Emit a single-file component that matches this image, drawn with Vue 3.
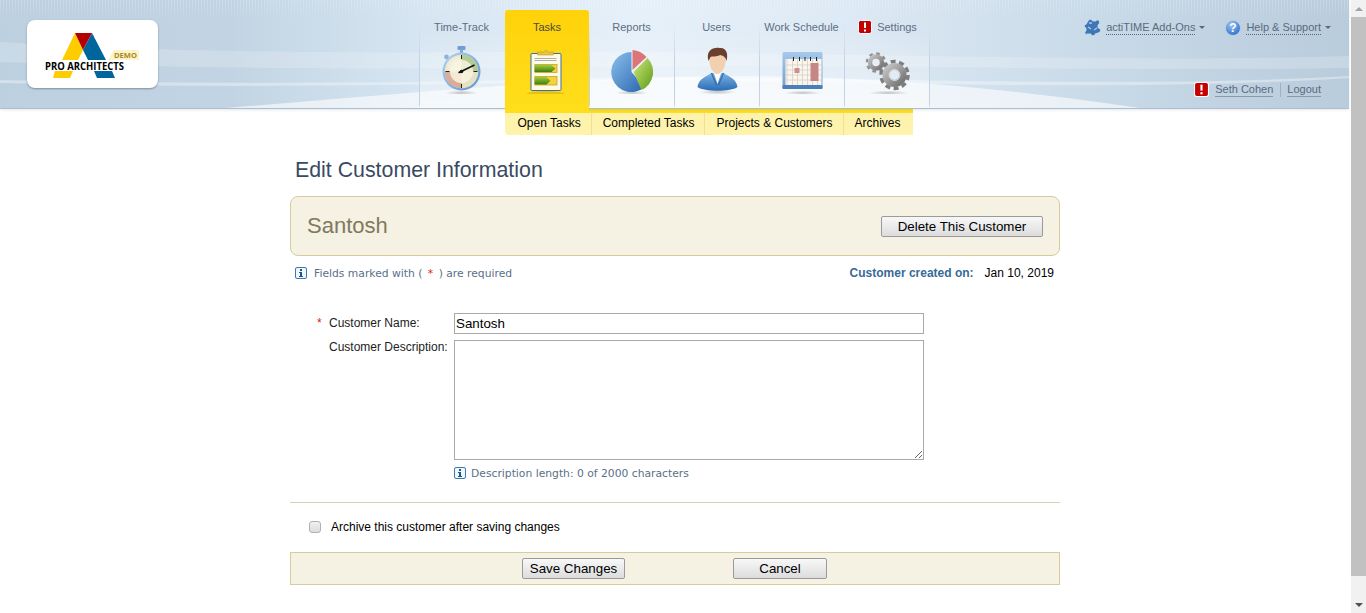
<template>
  <div class="page">
    <div class="main">
      <header class="header">
        <svg class="waves" viewBox="0 0 1349 108" preserveAspectRatio="none">
          <path d="M0 42 C120 50 300 54 500 52 C800 50 1100 64 1349 56 L1349 68 C1100 72 800 62 500 68 C300 70 120 66 0 62 Z" fill="#fff" opacity=".2" />
          <path d="M0 80 C200 84 400 84 600 78 C800 74 1100 90 1349 76 L1349 78 C1100 94 800 78 600 81 C400 86 200 88 0 83 Z" fill="#fff" opacity=".35" />
          <path d="M225 108 C400 94 560 78 720 76 C880 76 1000 88 1140 108 Z" fill="#fff" opacity=".6" />
        </svg>
        <div class="stripes"></div>

        <div class="logo">
          <svg width="131" height="68" viewBox="27 20 131 68">
            <polygon points="62,60 75,33 83,50 78,60" fill="#ffcc00" />
            <polygon points="75,33 92,33 83,50" fill="#b40000" />
            <polygon points="83,50 92,33 106,60 88,60" fill="#00659c" />
            <polygon points="55,71 73,71 70,78 53,78" fill="#ffcc00" />
            <polygon points="94,71 112,71 115,78 97,78" fill="#00659c" />
            <polygon points="108,60 114,50 139,50 139,60" fill="#fdf3c8" />
            <text x="114" y="58" class="logo-demo" textLength="23" lengthAdjust="spacingAndGlyphs">DEMO</text>
            <text x="45" y="70" class="logo-name" textLength="79" lengthAdjust="spacingAndGlyphs">PRO ARCHITECTS</text>
          </svg>
        </div>

        <nav class="tabs">
          <div class="tab">
            <span class="tab-label">Time-Track</span>
            <svg class="tab-icon" width="50" height="50" viewBox="437.5 44 50 50">
              <defs>
                <radialGradient id="shadow">
                  <stop offset="0" stop-color="#000" stop-opacity=".22" />
                  <stop offset="1" stop-color="#000" stop-opacity="0" />
                </radialGradient>
                <linearGradient id="blueRim" x1="0" y1="0" x2="1" y2="1">
                  <stop offset="0" stop-color="#b4d4f2" />
                  <stop offset="1" stop-color="#5b92d0" />
                </linearGradient>
                <radialGradient id="dial" cx=".4" cy=".4">
                  <stop offset="0" stop-color="#fffdf2" />
                  <stop offset="1" stop-color="#e6e0c4" />
                </radialGradient>
                <linearGradient id="pieBlue" x1="0" y1="0" x2="1" y2="1">
                  <stop offset="0" stop-color="#8cc0ec" />
                  <stop offset="1" stop-color="#2a66ae" />
                </linearGradient>
                <linearGradient id="pieGreen" x1="0" y1="0" x2="1" y2="1">
                  <stop offset="0" stop-color="#cfe87c" />
                  <stop offset="1" stop-color="#5c9a14" />
                </linearGradient>
                <linearGradient id="suit" x1="0" y1="0" x2="0" y2="1">
                  <stop offset="0" stop-color="#7fb2e4" />
                  <stop offset="1" stop-color="#2a6cb4" />
                </linearGradient>
                <linearGradient id="arrow" x1="0" y1="0" x2="0" y2="1">
                  <stop offset="0" stop-color="#a0cc3e" />
                  <stop offset="1" stop-color="#3f7d0a" />
                </linearGradient>
                <linearGradient id="calTop" x1="0" y1="0" x2="0" y2="1">
                  <stop offset="0" stop-color="#a6c8ea" />
                  <stop offset="1" stop-color="#6e9fd2" />
                </linearGradient>
                <linearGradient id="steel" x1="0" y1="0" x2="1" y2="1">
                  <stop offset="0" stop-color="#c4c4c4" />
                  <stop offset="1" stop-color="#727272" />
                </linearGradient>
                <radialGradient id="helpBlue" cx=".4" cy=".3" r=".8">
                  <stop offset="0" stop-color="#9cc4f0" />
                  <stop offset="1" stop-color="#2566c4" />
                </radialGradient>
              </defs>
              <ellipse cx="461" cy="93" rx="16" ry="3" fill="url(#shadow)" />
              <rect x="457" y="46" width="8" height="4" rx="1" fill="#6f9ed4" />
              <rect x="459.500" y="49" width="3" height="4" fill="#7ea7d6" />
              <circle cx="446" cy="57" r="2.400" fill="#8fb3dc" />
              <circle cx="461" cy="71.500" r="19" fill="url(#blueRim)" />
              <circle cx="461" cy="71.500" r="16.800" fill="url(#dial)" />
              <path d="M461 71.500 L461 54.700 A16.800 16.800 0 0 1 477.800 71.500 Z" fill="#a6c184" opacity=".75" />
              <path d="M461 71.500 L461 88.300 A16.800 16.800 0 0 1 444.200 71.500 Z" fill="#d49a8a" opacity=".75" />
              <circle cx="461" cy="71.500" r="11.500" fill="#f7f3de" opacity=".85" />
              <path d="M461 55v4M461 84v4M445 71.500h4M473 71.500h4" stroke="#222" stroke-width="1" />
              <path d="M458 72.800 L474 65" stroke="#111" stroke-width="1.600" />
              <circle cx="461" cy="71.500" r="1.800" fill="#111" />
            </svg>
          </div>

          <div class="tab tab-active">
            <span class="tab-label">Tasks</span>
            <svg class="tab-icon" width="50" height="50" viewBox="522.5 44 50 50">
              <ellipse cx="546" cy="94" rx="19" ry="3" fill="#c8a000" opacity=".45" />
              <rect x="531.500" y="53.500" width="30" height="37" rx="1" fill="#fdfbe6" stroke="#3a6cb2" />
              <path d="M538 55 V52 H544 L546.500 50 L549 52 H554 V55 Z" fill="#e7c04a" stroke="#c59c24" stroke-width=".6" />
              <path d="M535 58.500h22M535 60.500h22" stroke="#9a9a9a" stroke-width=".8" />
              <rect x="535.500" y="64.500" width="22" height="8" fill="#f7d23c" stroke="#b89a1a" stroke-width=".7" />
              <polygon points="535,65 552,65 556,68.500 552,72 535,72" fill="url(#arrow)" />
              <rect x="535.500" y="76.500" width="22" height="8.500" fill="#f7d23c" stroke="#b89a1a" stroke-width=".7" />
              <polygon points="535,77 547,77 551,80.700 547,84.500 535,84.500" fill="url(#arrow)" />
            </svg>
          </div>

          <div class="tab">
            <span class="tab-label">Reports</span>
            <svg class="tab-icon" width="50" height="50" viewBox="607.5 44 50 50">
              <ellipse cx="631" cy="93" rx="16" ry="3" fill="url(#shadow)" />
              <path d="M631 72 L631 52 A20 20 0 1 0 644 87 Z" fill="url(#pieBlue)" />
              <path d="M632 70 L632 50 A21 21 0 0 1 646 57 Z" fill="#dc7478" />
              <path d="M633 72 L647 58 A20 20 0 0 1 641 90 Z" fill="url(#pieGreen)" />
            </svg>
          </div>

          <div class="tab">
            <span class="tab-label">Users</span>
            <svg class="tab-icon" width="50" height="50" viewBox="692.5 44 50 50">
              <ellipse cx="717" cy="92" rx="19" ry="2.500" fill="url(#shadow)" />
              <path d="M697 87 C698 79 705 77 711 73 H723 C729 77 736 79 737 87 C730 92 704 92 697 87 Z" fill="url(#suit)" />
              <path d="M713 72 L717 84 L721 72 Z" fill="#fff" />
              <path d="M711 73 L716 85 M723 73 L718 85" stroke="#2d6bb0" stroke-width="1.200" fill="none" />
              <path d="M709 59 C709 52 725 52 725 59 C726 66 721 74 717 74 C713 74 708 66 709 59 Z" fill="#f2cfae" />
              <path d="M708 61 C705 51 712 47 719 48 C726 47 728 54 726 61 C725 57 723 56 720 55 C716 57 711 56 710 57 Z" fill="#6b3f2e" />
            </svg>
          </div>

          <div class="tab">
            <span class="tab-label">Work Schedule</span>
            <svg class="tab-icon" width="50" height="50" viewBox="777.5 44 50 50">
              <ellipse cx="802" cy="93" rx="18" ry="2.500" fill="url(#shadow)" />
              <rect x="782" y="52" width="40" height="37" rx="1.500" fill="url(#calTop)" />
              <rect x="782" y="85" width="40" height="4" rx="1" fill="#4c7fba" />
              <rect x="785" y="59" width="36" height="26" fill="#f9f6ee" />
              <path d="M786.500 59v26M792 59v26M797 59v26M802 59v26M807 59v26M812 59v26M817 59v26M785 65h36M785 70h36M785 75h36M785 80h36" stroke="#d6c8c0" stroke-width=".7" />
              <rect x="794" y="68" width="5" height="5" fill="#cc8e8e" />
              <rect x="810" y="63" width="8" height="18" fill="#c68686" />
              <path d="M793 57v4M799 57v4M804.500 57v4M810 57v4M816 57v4" stroke="#222" stroke-width="1" />
            </svg>
          </div>

          <div class="tab">
            <span class="tab-label tab-label-alert">
              <svg class="alert" width="14" height="14" viewBox="0 0 14 14">
                <rect x=".5" y=".5" width="13" height="13" rx="2" fill="#c40000" stroke="#fff" />
                <rect x="6" y="2.500" width="2" height="5.500" fill="#fff" />
                <rect x="6" y="9.500" width="2" height="2" fill="#fff" />
              </svg>
              Settings
            </span>
            <svg class="tab-icon" width="50" height="50" viewBox="862.5 44 50 50">
              <ellipse cx="888" cy="93" rx="20" ry="2.500" fill="url(#shadow)" />
              <circle cx="875.500" cy="62.500" r="9" fill="none" stroke="#8f8f8f" stroke-width="2.500" stroke-dasharray="3.500 3.570" />
              <circle cx="875.500" cy="62.500" r="6" fill="none" stroke="url(#steel)" stroke-width="4.500" />
              <circle cx="894" cy="75" r="13.500" fill="none" stroke="#7e7e7e" stroke-width="3.500" stroke-dasharray="5 3.480" />
              <circle cx="894" cy="75" r="8.500" fill="none" stroke="url(#steel)" stroke-width="7" />
              <circle cx="894" cy="75" r="5.500" fill="none" stroke="#dcdcdc" stroke-width="1" />
            </svg>
          </div>
        </nav>

        <div class="user-area">
          <div class="user-top">
            <span class="top-item">
              <svg width="17" height="17" viewBox="0 0 17 17">
                <path d="M4 2 C5 0 8 0 8.500 2 L12 2 C12 1 15 0 15.500 3 C16 5 14 5.500 14 6 L14 9 C15 8.500 17 10 16.500 12 C16 14 14 13.500 14 14 L11 15 C11.500 17 7 17.500 7 15 L3 15 C1 16 0 13 2 12 L2 9 C0 9 0 5 2 5.500 Z" fill="#3f76b6" stroke="#c9def2" stroke-width=".8" />
                <path d="M5 4 H8 M4 8 L7 10 M10 11 L13 9" stroke="#a9c9ea" stroke-width="1.400" fill="none" />
              </svg>
              <a class="dotted">actiTIME Add-Ons</a><i class="caret"></i>
            </span>
            <span class="top-item">
              <svg width="16" height="16" viewBox="0 0 16 16">
                <circle cx="8" cy="8" r="7.500" fill="url(#helpBlue)" stroke="#b4cfec" />
                <text x="8" y="12" class="help-mark" text-anchor="middle">?</text>
              </svg>
              <a class="dotted">Help &amp; Support</a><i class="caret"></i>
            </span>
          </div>
          <div class="user-bottom">
            <svg class="alert" width="15" height="15" viewBox="0 0 14 14">
              <rect x=".5" y=".5" width="13" height="13" rx="2" fill="#c40000" stroke="#fff" />
              <rect x="6" y="2.500" width="2" height="5.500" fill="#fff" />
              <rect x="6" y="9.500" width="2" height="2" fill="#fff" />
            </svg>
            <a class="solid">Seth Cohen</a>
            <span class="sep"></span>
            <a class="solid">Logout</a>
          </div>
        </div>
      </header>

      <div class="subnav">
        <a v-for="item in subItems" :key="item" class="subnav-item">{{ item }}</a>
      </div>

      <main class="content">
        <h1 class="title">Edit Customer Information</h1>

        <section class="name-panel">
          <span class="name">Santosh</span>
          <button class="btn btn-delete">Delete This Customer</button>
        </section>

        <div class="note-row">
          <span class="note note-fields">
            <svg class="info" width="12" height="12" viewBox="0 0 12 12">
              <rect x=".5" y=".5" width="11" height="11" rx="1.500" fill="#eef5fb" stroke="#3f78ad" />
              <rect x="5" y="2" width="2" height="2" fill="#1f5688" />
              <path d="M4 5h3v4h1v1H4V9h1V6H4Z" fill="#1f5688" />
            </svg>
            <span>Fields marked with ( <b class="req">*</b> ) are required</span>
          </span>
          <span class="created"><b>Customer created on:</b><span class="created-date">Jan 10, 2019</span></span>
        </div>

        <form class="form" @submit.prevent>
          <label class="form-label"><span class="req">*</span>Customer Name:</label>
          <input class="field" type="text" value="Santosh" />
          <label class="form-label form-label-top">Customer Description:</label>
          <textarea class="field field-area"></textarea>
          <span class="note note-length">
            <svg class="info" width="12" height="12" viewBox="0 0 12 12">
              <rect x=".5" y=".5" width="11" height="11" rx="1.500" fill="#eef5fb" stroke="#3f78ad" />
              <rect x="5" y="2" width="2" height="2" fill="#1f5688" />
              <path d="M4 5h3v4h1v1H4V9h1V6H4Z" fill="#1f5688" />
            </svg>
            <span>Description length: 0 of 2000 characters</span>
          </span>
        </form>

        <div class="divider"></div>

        <label class="archive">
          <input class="check" type="checkbox" />
          <span>Archive this customer after saving changes</span>
        </label>

        <div class="actions">
          <button class="btn btn-save">Save Changes</button>
          <button class="btn btn-cancel">Cancel</button>
        </div>
      </main>
    </div>

    <div class="scrollbar">
      <div class="scroll-arrow"><i class="arrow-up"></i></div>
      <div class="scroll-thumb"></div>
      <div class="scroll-rest"></div>
      <div class="scroll-arrow"><i class="arrow-down"></i></div>
    </div>
  </div>
</template>

<script setup>
const subItems = ['Open Tasks', 'Completed Tasks', 'Projects & Customers', 'Archives']
</script>

<style>
html, body {
  margin: 0;
  overflow: hidden;
  background: #fff;
}
</style>

<style scoped>
.page {
  display: flex;
  height: 613px;
  overflow: hidden;
  font-family: "Liberation Sans", Arial, sans-serif;
  font-size: 12px;
  color: #000;
}

.main {
  flex: 1;
  min-width: 0;
}

.header {
  position: relative;
  display: flex;
  height: 108px;
  border-bottom: 1px solid #a9bfd3;
  box-shadow: 0 1px 3px rgba(0, 0, 0, 0.1);
  background: linear-gradient(90deg, #bdd0e0 0, #c2d4e3 230px, #d6e5f1 420px, #e6f0f9 640px, #dde9f4 850px, #c9dae8 1090px, #b9ccdc 1349px);
}

.waves {
  position: absolute;
  left: 0;
  top: 0;
  width: 100%;
  height: 100%;
}

.stripes {
  position: absolute;
  left: 0;
  top: 0;
  width: 100%;
  height: 20px;
  background: repeating-linear-gradient(90deg, rgba(255, 255, 255, 0.22) 0 1px, transparent 1px 3px);
  -webkit-mask-image: linear-gradient(#000, transparent);
  mask-image: linear-gradient(#000, transparent);
}

.logo {
  position: relative;
  width: 131px;
  height: 68px;
  margin: 20px 0 0 27px;
  background: #fff;
  border-radius: 8px;
  box-shadow: 0 1px 2px rgba(60, 80, 100, 0.5);
}

.logo svg {
  display: block;
}

.logo-name {
  font-family: "Open Sans", sans-serif;
  font-weight: 700;
  font-size: 11px;
  fill: #000;
}

.logo-demo {
  font-family: "Open Sans", sans-serif;
  font-weight: 700;
  font-size: 7.500px;
  fill: #a8892c;
}

.tabs {
  position: relative;
  display: flex;
  margin: 0 0 0 261px;
}

.tab {
  display: flex;
  flex-direction: column;
  align-items: center;
  width: 85px;
  height: 108px;
  border-radius: 0 0 4px 4px;
  background:
    linear-gradient(rgba(195, 210, 228, 0) 25px, #c3d2e4 60px) left top / 1px 100% no-repeat,
    linear-gradient(rgba(255, 255, 255, 0) 25%, rgba(255, 255, 255, 0.4));
}

.tab:last-child {
  width: 86px;
  background:
    linear-gradient(rgba(195, 210, 228, 0) 25px, #c3d2e4 60px) left top / 1px 100% no-repeat,
    linear-gradient(rgba(195, 210, 228, 0) 25px, #c3d2e4 60px) right top / 1px 100% no-repeat,
    linear-gradient(rgba(255, 255, 255, 0) 25%, rgba(255, 255, 255, 0.4));
}

.tab-active {
  position: relative;
  z-index: 2;
  width: 84px;
  height: 103px;
  margin-top: 10px;
  margin-left: 1px;
  border-radius: 3px 3px 0 0;
  background: linear-gradient(#ffd20a, #ffde1c);
}

.tab-label {
  display: block;
  margin-top: 20px;
  height: 14px;
  line-height: 14px;
  font-size: 11px;
  color: #5e6e82;
  white-space: nowrap;
}

.tab-active .tab-label {
  margin-top: 10px;
  color: #4a4a3a;
}

.tab-label-alert {
  display: flex;
  align-items: center;
  gap: 5px;
  margin-left: 1px;
}

.tab-icon {
  display: block;
  margin: 10px 0 0 2px;
}

.tab-active .tab-icon {
  margin-left: 0;
}

.tab:last-child .tab-icon {
  margin-left: 1px;
}

.alert {
  display: block;
  flex: none;
}

.user-area {
  position: relative;
  margin-left: auto;
  padding-right: 18px;
  display: flex;
  flex-direction: column;
  align-items: flex-end;
  font-size: 11px;
  color: #5a6a7d;
}

.user-top {
  display: flex;
  align-items: center;
  gap: 20px;
  margin-top: 19px;
}

.top-item {
  display: flex;
  align-items: center;
  gap: 5px;
}

.help-mark {
  font-size: 12px;
  font-weight: 700;
  fill: #fff;
}

.dotted {
  border-bottom: 1px dotted #55657a;
  line-height: 13px;
}

.caret {
  width: 0;
  height: 0;
  margin-left: -1px;
  border: 3px solid transparent;
  border-top-color: #5a6a7d;
  border-bottom: 0;
}

.user-bottom {
  display: flex;
  align-items: center;
  margin-top: 46px;
  margin-right: 10px;
}

.solid {
  border-bottom: 1px solid #8a99aa;
  line-height: 13px;
}

.user-bottom .solid:first-of-type {
  margin-left: 6px;
}

.sep {
  width: 1px;
  height: 14px;
  margin: 0 6px 0 7px;
  background: #9fb0c0;
}

.subnav {
  display: flex;
  width: 408px;
  height: 22px;
  margin-left: 505px;
  border-top: 4px solid #ffdf22;
  border-radius: 0 0 0 4px;
  background: #fdf3ad;
  color: #000;
  line-height: 20px;
}

.subnav-item {
  padding: 0 10px 0 11px;
  border-left: 1px solid #f1e08e;
  white-space: nowrap;
}

.subnav-item:first-child {
  padding-left: 12.500px;
  border-left: 0;
}

.content {
  width: 770px;
  margin-left: 290px;
}

.title {
  margin: 23px 0 14px 5px;
  height: 24px;
  line-height: 24px;
  font-size: 21.330px;
  font-weight: 400;
  color: #3a4a62;
}

.name-panel {
  display: flex;
  align-items: center;
  justify-content: space-between;
  box-sizing: border-box;
  height: 60px;
  padding: 0 16px;
  background: #f5f1e3;
  border: 1px solid #d5cd9b;
  border-radius: 8px;
}

.name {
  font-size: 22px;
  color: #7f7a5e;
}

.btn {
  box-sizing: border-box;
  height: 21px;
  padding: 0;
  font-family: inherit;
  font-size: 13.330px;
  color: #000;
  background: linear-gradient(#f8f8f8, #dcdcdc);
  border: 1px solid #9a9a9a;
  border-radius: 2px;
}

.btn-delete {
  width: 162px;
}

.note-row {
  display: flex;
  align-items: center;
  justify-content: space-between;
  height: 16px;
  margin-top: 9px;
  padding: 0 6px 0 5px;
}

.note {
  display: flex;
  align-items: center;
  font-family: "DejaVu Sans", sans-serif;
  font-size: 10.750px;
  color: #5a7088;
  white-space: nowrap;
}

.note-fields {
  gap: 7px;
}

.note-fields .req {
  margin: 0 2px;
}

.info {
  display: block;
  flex: none;
}

.req {
  color: #d92020;
  font-weight: 400;
}

.created {
  display: flex;
  color: #000;
}

.created b {
  color: #376a99;
}

.created-date {
  margin-left: 11px;
}

.form {
  display: grid;
  grid-template-columns: 164px 470px;
  row-gap: 6px;
  margin-top: 32px;
}

.form-label {
  display: block;
  padding-left: 39px;
  line-height: 20px;
  color: #222;
  position: relative;
}

.form-label .req {
  position: absolute;
  left: 27px;
}

.form-label-top {
  line-height: 14px;
}

.field {
  box-sizing: border-box;
  display: block;
  width: 470px;
  height: 21px;
  margin: 0;
  padding: 0 1px;
  font-family: inherit;
  font-size: 13.330px;
  color: #000;
  background: #fff;
  border: 1px solid #a9a9a9;
  border-radius: 0;
  outline: 0;
}

.field-area {
  height: 120px;
}

.note-length {
  grid-column: 2;
  height: 16px;
  margin-top: -1px;
  gap: 5px;
}

.divider {
  height: 1px;
  margin-top: 21px;
  background: #d8d2a8;
}

.archive {
  display: flex;
  align-items: center;
  gap: 10px;
  height: 14px;
  margin-top: 17px;
  padding-left: 19px;
  color: #000;
}

.check {
  appearance: none;
  box-sizing: border-box;
  width: 12px;
  height: 12px;
  margin: 0;
  background: linear-gradient(#f0f0f0, #dcdcdc);
  border: 1px solid #b0b0b0;
  border-radius: 3px;
}

.actions {
  position: relative;
  display: flex;
  align-items: center;
  box-sizing: border-box;
  height: 33px;
  margin-top: 18px;
  padding-left: 231px;
  background: #f5f1e3;
  border: 1px solid #d5cd9b;
}

.btn-save {
  width: 103px;
}

.btn-cancel {
  width: 94px;
  margin-left: 108px;
}

.scrollbar {
  display: flex;
  flex-direction: column;
  align-items: flex-end;
  flex: none;
  width: 17px;
  height: 613px;
}

.scroll-arrow {
  display: flex;
  align-items: center;
  justify-content: center;
  width: 15px;
  height: 17px;
  background: #f1f1f1;
}

.arrow-up,
.arrow-down {
  width: 0;
  height: 0;
  border: 4px solid transparent;
}

.arrow-up {
  border-top: 0;
  border-bottom-color: #a3a3a3;
}

.arrow-down {
  border-bottom: 0;
  border-top-color: #505050;
}

.scroll-thumb {
  width: 15px;
  height: 559px;
  background: #c1c1c1;
}

.scroll-rest {
  flex: 1;
  width: 15px;
  background: #f1f1f1;
}
</style>
